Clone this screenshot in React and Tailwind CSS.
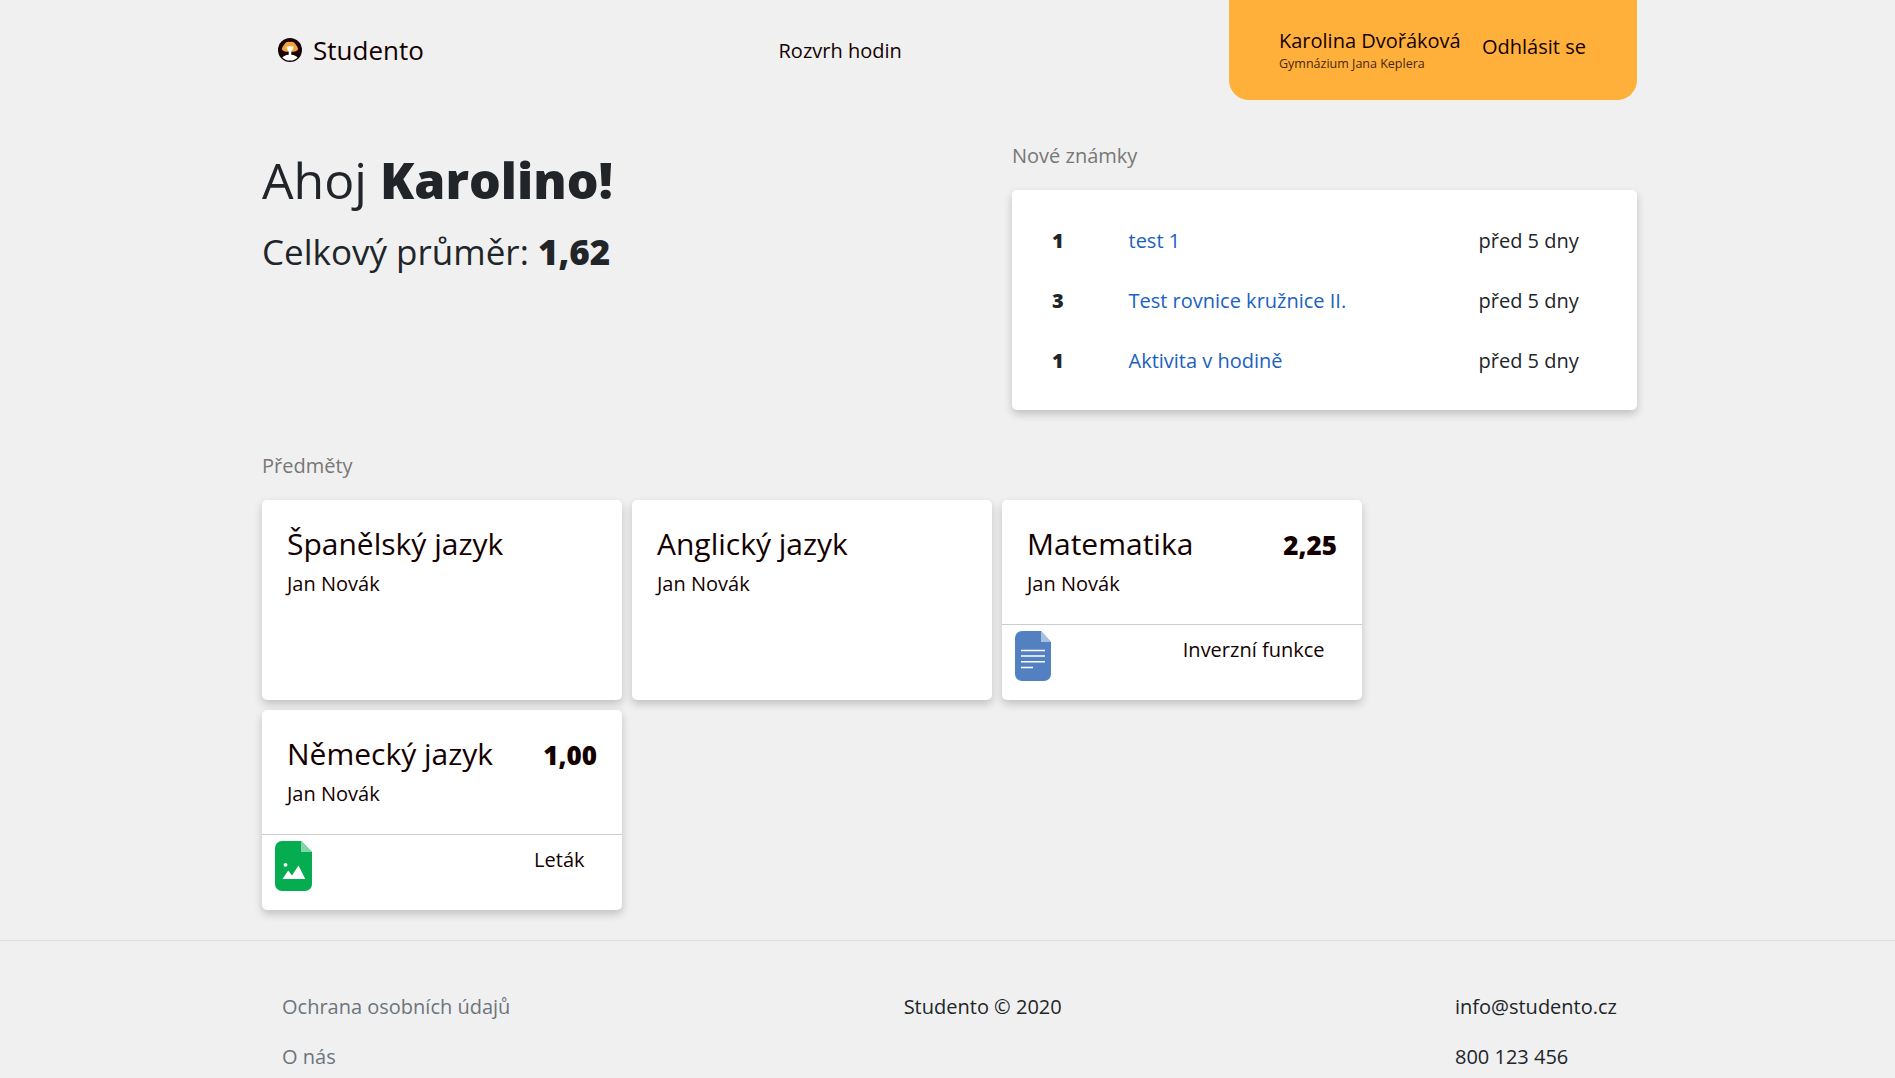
const grades = [
  { value: "1", title: "test 1", date: "před 5 dny" },
  { value: "3", title: "Test rovnice kružnice II.", date: "před 5 dny" },
  { value: "1", title: "Aktivita v hodině", date: "před 5 dny" },
];

const subjects = [
  { name: "Španělský jazyk", teacher: "Jan Novák" },
  { name: "Anglický jazyk", teacher: "Jan Novák" },
  { name: "Matematika", teacher: "Jan Novák", average: "2,25", material: "Inverzní funkce", icon: "doc" },
  { name: "Německý jazyk", teacher: "Jan Novák", average: "1,00", material: "Leták", icon: "image" },
];

function Logo() {
  return (
    <svg className="mr-[11.500px] size-6" viewBox="0 0 24 24">
      <circle cx="12" cy="12" r="12" fill="#1a0205" />
      <path d="M12 4c2-.6 4.400 0 5.300 1.900 1.400 1.500 2.500 3.200 2.900 5.200-.9 2-2.800 2.800-5 2.700H8.800c-2.200.1-4.100-.7-5-2.700.4-2 1.500-3.700 2.900-5.200C7.600 4 10 3.400 12 4z" fill="#f2a33c" />
      <path d="M8.600 8.600c1.300.1 2.300-.2 3.400-.7 1.100.5 2.100.8 3.400.7 0 2.100-.7 3.700-2.100 4.700v3.400c2.900.3 5.300 1.200 6.300 2.700-1.700 2-4.400 3.200-7.600 3.200s-5.900-1.200-7.600-3.200c1-1.500 3.400-2.400 6.300-2.700v-3.400c-1.400-1-2.100-2.600-2.100-4.700z" fill="#fff" />
    </svg>
  );
}

function DocIcon() {
  return (
    <svg className="h-[50px] w-[36px]" viewBox="0 0 36 50">
      <path d="M7 0H26L36 11V43a7 7 0 0 1-7 7H7a7 7 0 0 1-7-7V7a7 7 0 0 1 7-7z" fill="#5280c1" />
      <path d="M26 0L36 11H26z" fill="#a8c0e0" />
      <path d="M6 19.500H30M6 25H30M6 30.800H30M6 36.400H18" stroke="#fff" strokeWidth="1.500" />
    </svg>
  );
}

function ImageIcon() {
  return (
    <svg className="h-[50px] w-[37px]" viewBox="0 0 37 50">
      <path d="M7 0H26L37 11V43a7 7 0 0 1-7 7H7a7 7 0 0 1-7-7V7a7 7 0 0 1 7-7z" fill="#05ac50" />
      <path d="M26 0L37 11H26z" fill="#82d5a7" />
      <circle cx="10.500" cy="23.800" r="1.900" fill="#fff" />
      <path d="M7.500 38L13.200 29.500L17 34.500L23.500 24.500L30.300 38z" fill="#fff" />
    </svg>
  );
}

const cardClass = "rounded-[5px] bg-white shadow-[0_4px_8px_rgba(0,0,0,0.2)]";

function SubjectCard({ subject }) {
  return (
    <a className={`flex h-[200px] w-[360px] flex-col text-[#140000] ${cardClass}`}>
      <div className="flex h-[124px] justify-between px-[25px] pt-[26px]">
        <div>
          <h3 className="text-[30px] leading-9">{subject.name}</h3>
          <p className="mt-[7px]">{subject.teacher}</p>
        </div>
        <span className="text-[26px] leading-[39px] font-extrabold">{subject.average}</span>
      </div>
      {subject.material && (
        <div className="flex grow justify-between border-t border-[#ccc] pt-[6px] pr-[37.500px] pl-[13px]">
          {subject.icon === "doc" ? <DocIcon /> : <ImageIcon />}
          <span className="pt-1">{subject.material}</span>
        </div>
      )}
    </a>
  );
}

export default function App() {
  return (
    <div className="h-[1078px] overflow-hidden bg-[#f0f0f0] font-['Open_Sans',sans-serif] text-[20px] leading-[30px] text-[#212529]">
      <div className="mx-auto w-[1375px] translate-x-[2px]">
        <header className="flex h-[100px] items-center text-[#140000]">
          <a className="flex w-[516.500px] items-center pl-[15.500px] text-[26px]">
            <Logo />
            Studento
          </a>
          <a className="grow pt-[2px]">Rozvrh hodin</a>
          <div className="flex h-[100px] w-[408px] rounded-b-[20px] bg-[#ffb03b] pt-[26px] pl-[50px]">
            <div className="w-[203px]">
              <p>Karolina Dvořáková</p>
              <p className="text-[12.500px] leading-[15px] opacity-80">Gymnázium Jana Keplera</p>
            </div>
            <a className="pt-[6px]">Odhlásit se</a>
          </div>
        </header>

        <main>
          <section className="flex h-[310px] justify-between">
            <div className="pt-[50px]">
              <h1 className="text-[50px] leading-[60px]">
                Ahoj <b className="font-extrabold">Karolino!</b>
              </h1>
              <h2 className="mt-[21px] text-[35px] leading-[42px]">
                Celkový průměr: <b className="font-extrabold">1,62</b>
              </h2>
            </div>
            <div className="w-[625px] pt-[41px]">
              <h4 className="mb-[19px] text-[#777]">Nové známky</h4>
              <ul className={`px-10 pt-[21px] pb-[19px] ${cardClass}`}>
                {grades.map((grade) => (
                  <li key={grade.title} className="flex h-[60px] items-center">
                    <span className="w-[76.500px] font-extrabold">{grade.value}</span>
                    <a className="w-[350px] text-[#1b61c1]">{grade.title}</a>
                    <span>{grade.date}</span>
                  </li>
                ))}
              </ul>
            </div>
          </section>

          <section className="pt-[41px]">
            <h4 className="mb-[19px] text-[#777]">Předměty</h4>
            <div className="flex w-[1110px] flex-wrap gap-[10px]">
              {subjects.map((subject) => (
                <SubjectCard key={subject.name} subject={subject} />
              ))}
            </div>
          </section>
        </main>
      </div>

      <footer className="mt-[30px] border-t border-[#dedede]">
        <div className="mx-auto flex w-[1335px] translate-x-[2px] justify-between pt-[51px]">
          <div className="flex flex-col gap-5 text-[#6c757d]">
            <a>Ochrana osobních údajů</a>
            <a>O nás</a>
          </div>
          <p>Studento © 2020</p>
          <div className="flex flex-col gap-5">
            <p>info@studento.cz</p>
            <p>800 123 456</p>
          </div>
        </div>
      </footer>
    </div>
  );
}
